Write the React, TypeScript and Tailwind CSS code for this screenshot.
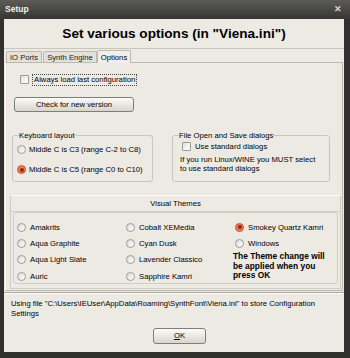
import React from "react";

function Radio({ checked = false }: { checked?: boolean }) {
  return (
    <span
      className={`w-[9px] h-[9px] shrink-0 rounded-full border flex items-center justify-center ${
        checked
          ? "border-[#c45a34] bg-[#f07a50]"
          : "border-[#9a9a98] bg-linear-to-br from-[#dcdcda] to-white"
      }`}
    >
      {checked && <span className="w-[4px] h-[4px] rounded-full bg-[#8a2c14]" />}
    </span>
  );
}

function Check() {
  return (
    <span className="w-[9px] h-[9px] shrink-0 rounded-[1px] border border-[#9a9a98] bg-linear-to-br from-[#e2e2e0] to-white" />
  );
}

function Option({ label, checked }: { label: string; checked?: boolean }) {
  return (
    <div className="flex items-center gap-[3px] h-[13px]">
      <Radio checked={checked} />
      <span>{label}</span>
    </div>
  );
}

function Theme({ label, checked }: { label: string; checked?: boolean }) {
  return (
    <div className="flex items-center gap-[4px] h-[16.3px]">
      <Radio checked={checked} />
      <span>{label}</span>
    </div>
  );
}

export default function App() {
  return (
    <div className="w-[350px] h-[358px] bg-[#30302e] flex flex-col font-['Liberation_Sans',Arial,sans-serif] text-black overflow-hidden">
      <div className="h-[19px] shrink-0 flex items-center justify-between pl-[5px] pr-[8px] bg-linear-to-b from-[#5c5b57] to-[#363634]">
        <span className="text-[8.5px] font-bold text-[#f2f2ee]">Setup</span>
        <span className="text-[9px] font-bold text-[#d6d6d2] leading-none">✕</span>
      </div>

      <div className="ml-[4px] mr-[6px] mb-[6px] flex-1 bg-[#edeae4] flex flex-col text-[7.7px] leading-[9px]">
        <div className="h-[30px] shrink-0 flex items-center justify-center border-b border-[#c8c5bd] text-[13.6px] leading-none font-bold">
          Set various options (in "Viena.ini")
        </div>

        <div className="h-[13px] shrink-0 flex items-end pl-[2px]">
          <div className="h-[11px] w-[36px] flex items-center justify-center border border-b-0 border-[#bcb9b1] rounded-t-[2px] bg-[#e4e1da] text-[#222]">
            IO Ports
          </div>
          <div className="h-[11px] w-[54px] ml-[1px] flex items-center justify-center border border-b-0 border-[#bcb9b1] rounded-t-[2px] bg-[#e4e1da] text-[#222]">
            Synth Engine
          </div>
          <div className="relative z-10 -mb-px h-[13px] w-[34px] flex items-center justify-center border border-b-0 border-[#bcb9b1] rounded-t-[2px] bg-[#f1efea]">
            Options
          </div>
        </div>

        <div className="ml-[1px] mr-[1px] border border-[#bcb9b1] border-l-white flex flex-col">
          <div className="mt-[10px] ml-[14px] h-[13px] flex items-center gap-[3px]">
            <Check />
            <span className="border border-dotted border-[#444] px-[1px] leading-[10px]">
              Always load last configuration
            </span>
          </div>

          <button className="mt-[11px] ml-[8px] w-[120px] h-[15px] rounded-[3px] border border-[#7d7d7b] bg-linear-to-b from-[#fbfbf9] to-[#d8d5cd] text-[7.7px] leading-none">
            Check for new version
          </button>

          <div className="mt-[19px] flex">
            <fieldset className="ml-[6px] w-[141px] h-[51px] border border-[#c9c6be] rounded-[3px] pl-[4px]">
              <legend className="ml-[2px] px-0 leading-[9px]">Keyboard layout</legend>
              <div className="pt-[3px] flex flex-col gap-[7px]">
                <Option label="Middle C is C3 (range C-2 to C8)" />
                <Option label="Middle C is C5 (range C0 to C10)" checked />
              </div>
            </fieldset>

            <fieldset className="ml-[19px] w-[158px] h-[51px] border border-[#c9c6be] rounded-[3px] pl-[7px]">
              <legend className="-ml-[1px] leading-[9px]">File Open and Save dialogs</legend>
              <div className="pt-[2px] pl-[2px] h-[11px] flex items-center gap-[4px]">
                <Check />
                <span>Use standard dialogs</span>
              </div>
              <p className="mt-[4px] leading-[9px]">
                If you run Linux/WINE you MUST select
                <br />
                to use standard dialogs
              </p>
            </fieldset>
          </div>

          <div className="mt-[13px] ml-[4px] mr-[1px] mb-[1px] h-[94px] border border-[#cfccc4] border-t-white flex flex-col">
            <div className="h-[16px] shrink-0 flex items-center justify-center border-b border-[#d2cfc7]">
              Visual Themes
            </div>
            <div className="mx-[2px] h-[72px] border border-[#cfccc4] rounded-[3px] pl-[3px] pt-[6px] grid grid-cols-[109px_109px_1fr] grid-rows-[16.3px_16.3px_16.3px_16.3px]">
              <Theme label="Amakrits" />
              <Theme label="Cobalt XEMedia" />
              <Theme label="Smokey Quartz Kamri" checked />
              <Theme label="Aqua Graphite" />
              <Theme label="Cyan Dusk" />
              <Theme label="Windows" />
              <Theme label="Aqua Light Slate" />
              <Theme label="Lavender Classico" />
              <div className="row-span-2 -ml-[2px] pt-[0.5px] text-[8.4px] leading-[9.5px] font-bold">
                The Theme change will
                <br />
                be applied when you
                <br />
                press OK
              </div>
              <Theme label="Auric" />
              <Theme label="Sapphire Kamri" />
            </div>
          </div>
        </div>

        <div className="mt-[1px] border-t border-[#a9a69e] border-b border-b-white" />

        <p className="mt-[5px] pl-[7px] leading-[9.5px]">
          Using file "C:\Users\IEUser\AppData\Roaming\SynthFont\Viena.ini" to store Configuration
          <br />
          Settings
        </p>

        <button className="mt-[10px] ml-[149px] w-[53px] h-[16px] rounded-[3px] border border-[#7d7d7b] bg-linear-to-b from-[#fbfbf9] to-[#d8d5cd] text-[7.7px] leading-none">
          <span className="underline">O</span>K
        </button>
      </div>
    </div>
  );
}
